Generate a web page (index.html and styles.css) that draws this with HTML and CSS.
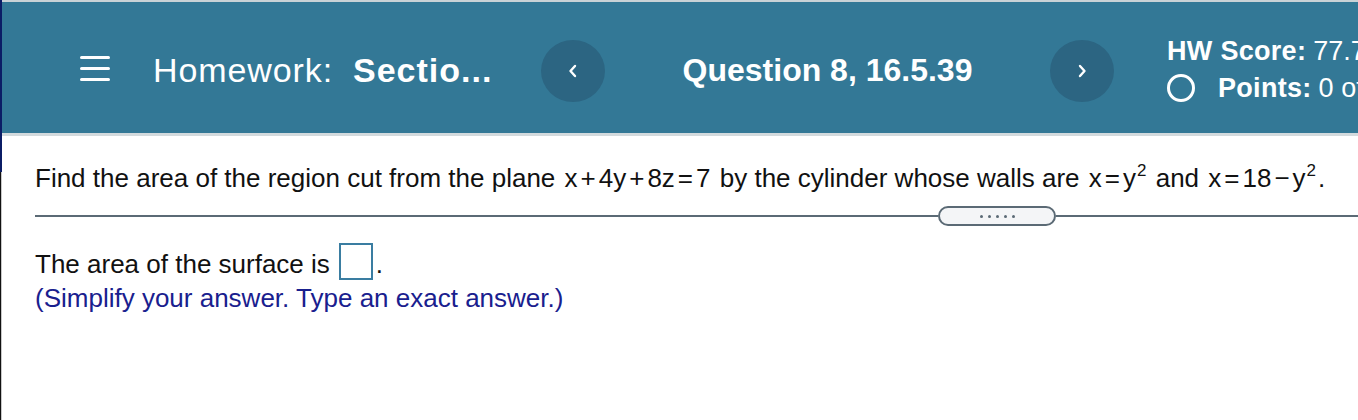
FILE: index.html
```html
<!DOCTYPE html>
<html lang="en">
<head>
<meta charset="utf-8">
<title>Homework</title>
<link rel="stylesheet" href="styles.css">
</head>
<body>
<div class="page">
  <div class="edge"></div>
  <div class="main">
    <header class="topbar">
      <div class="menu"><span></span><span></span><span></span></div>
      <div class="title"><span class="hw">Homework:</span><span class="sec">Sectio...</span></div>
      <button class="nav" aria-label="Previous question">
        <svg width="12" height="16" viewBox="0 0 12 16"><polyline points="8,3 3.5,8 8,13" fill="none" stroke="#fff" stroke-width="2.4" stroke-linecap="round" stroke-linejoin="round"/></svg>
      </button>
      <div class="qnum">Question 8, 16.5.39</div>
      <button class="nav" aria-label="Next question">
        <svg width="12" height="16" viewBox="0 0 12 16"><polyline points="4,3 8.5,8 4,13" fill="none" stroke="#fff" stroke-width="2.4" stroke-linecap="round" stroke-linejoin="round"/></svg>
      </button>
      <div class="score">
        <div class="sline"><b>HW Score:</b> 77.78%, 7 of 9 points</div>
        <div class="sline"><span class="ring"></span><b>Points:</b> 0 of 1</div>
      </div>
    </header>
    <section class="content">
      <p class="question">Find the area of the region cut from the plane <span class="m">x<i>+</i>4y<i>+</i>8z<i>=</i>7</span> by the cylinder whose walls are <span class="m">x<i>=</i>y<sup>2</sup></span> and <span class="m">x<i>=</i>18<i>−</i>y<sup>2</sup></span>.</p>
      <div class="divider">
        <div class="rule"></div>
        <div class="pill"><span></span><span></span><span></span><span></span><span></span></div>
        <div class="rule"></div>
      </div>
      <p class="answer">The area of the surface is<span class="box"></span>.</p>
      <p class="hint">(Simplify your answer. Type an exact answer.)</p>
    </section>
  </div>
</div>
</body>
</html>
```
FILE: styles.css
```css
html, body {
  margin: 0;
  padding: 0;
  background: #fff;
  overflow: hidden;
}
body {
  font-family: "Liberation Sans", Arial, sans-serif;
}
.page {
  display: flex;
  height: 420px;
}
.edge {
  width: 2px;
  flex: none;
  background:
    linear-gradient(#0b1d66, #0b1d66) top / 100% 172px no-repeat,
    linear-gradient(to right, #111 1px, #c8c8c8 1px);
}
.main {
  flex: 1;
  min-width: 0;
  overflow: hidden;
}
.topbar {
  box-sizing: border-box;
  height: 136px;
  background: #337896;
  border-top: 2px solid #c9d2d6;
  border-bottom: 3px solid #d3dadd;
  display: flex;
  align-items: center;
  padding: 6px 0 0 78px;
  color: #fff;
  white-space: nowrap;
}
.topbar > * {
  flex: none;
}
.menu {
  width: 30px;
  display: flex;
  flex-direction: column;
  gap: 8px;
  margin-top: -4px;
}
.menu span {
  display: block;
  height: 3px;
  background: #fff;
  border-radius: 2px;
}
.title {
  margin-left: 43px;
  width: 388px;
  font-size: 34px;
}
.title .hw {
  letter-spacing: 0.9px;
}
.title .sec {
  font-weight: bold;
  margin-left: 20px;
  letter-spacing: 1px;
}
.nav {
  width: 64px;
  height: 62px;
  border-radius: 50%;
  border: 0;
  padding: 0;
  background: #2c6582;
  display: flex;
  align-items: center;
  justify-content: center;
}
.qnum {
  width: 445px;
  text-align: center;
  font-size: 32px;
  font-weight: bold;
}
.score {
  margin-left: 53px;
  font-size: 27px;
  line-height: 37px;
  margin-top: -2px;
}
.sline {
  display: flex;
  align-items: center;
}
.sline b {
  margin-right: 7px;
  letter-spacing: 0.3px;
}
.ring {
  box-sizing: border-box;
  width: 28px;
  height: 28px;
  border: 3px solid #fff;
  border-radius: 50%;
  margin-right: 23px;
}
.content {
  padding: 27px 0 0 33px;
  color: #111;
}
.question {
  margin: 0;
  font-size: 26px;
  line-height: 30px;
  white-space: nowrap;
}
.m {
  margin: 0 2px;
}
.m i {
  font-style: normal;
  margin: 0 3px;
}
.m sup {
  font-size: 17px;
  line-height: 0;
  vertical-align: 11px;
  margin-left: 1px;
}
.divider {
  display: grid;
  grid-template-columns: 903px 118px 1fr;
  align-items: center;
  height: 20px;
  margin-top: 13px;
}
.rule {
  height: 2px;
  background: #5b6a75;
}
.pill {
  height: 16px;
  border: 2px solid #5b6a75;
  border-radius: 10px;
  background: #f4f5f7;
  display: flex;
  align-items: center;
  justify-content: center;
  gap: 5px;
}
.pill span {
  width: 3px;
  height: 3px;
  border-radius: 50%;
  background: #5b6a75;
}
.answer {
  margin: 17px 0 0;
  font-size: 26px;
  line-height: 30px;
}
.box {
  display: inline-block;
  width: 30px;
  height: 33px;
  border: 2px solid #3a7da1;
  margin: 0 3px 0 9px;
  vertical-align: -7px;
}
.hint {
  margin: 3px 0 0;
  font-size: 26px;
  line-height: 30px;
  color: #19208e;
}
```
